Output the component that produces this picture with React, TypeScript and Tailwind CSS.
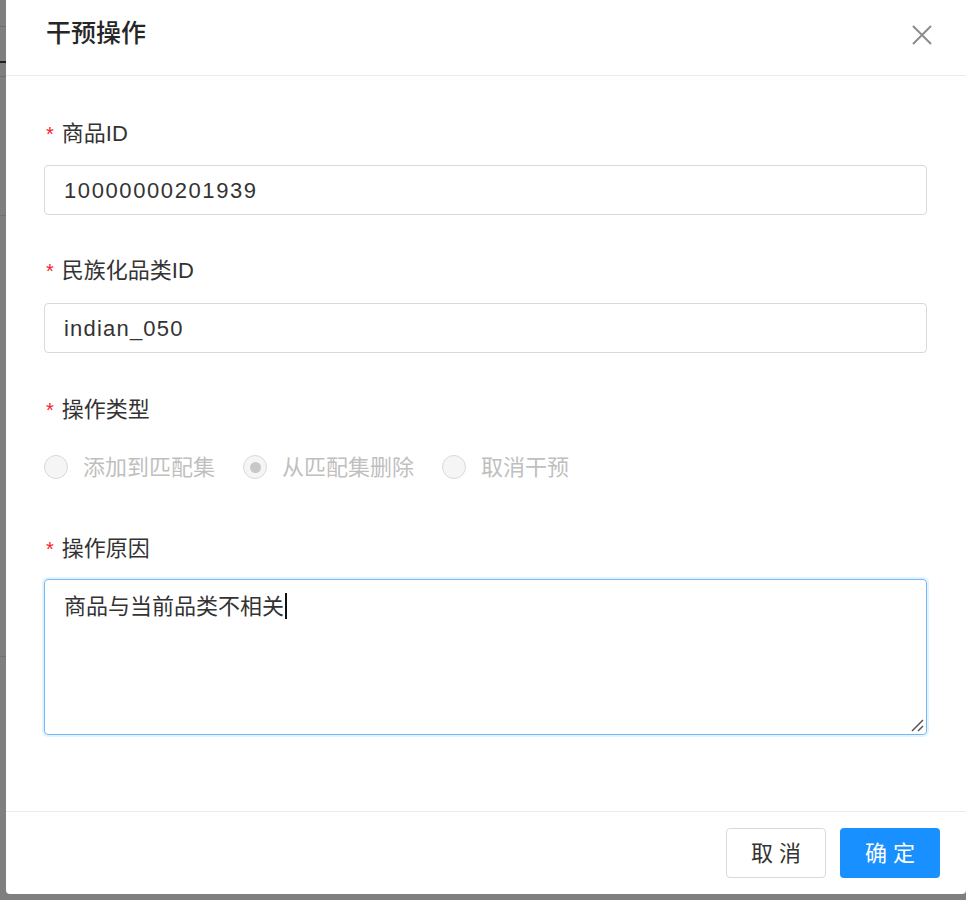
import React from "react";

const font = {
  fontFamily: '"Liberation Sans", "Noto Sans CJK SC", sans-serif',
};

function Label({ text }: { text: string }) {
  return (
    <div className="flex h-[32px] items-center text-[22px] leading-[32px] text-[#333]">
      <span className="mr-[8px] ml-[2px] text-[20px] text-[#f5222d]">*</span>
      {text}
    </div>
  );
}

function Radio({ label, checked }: { label: string; checked?: boolean }) {
  return (
    <div className="flex items-center">
      <span className="flex h-[24px] w-[24px] items-center justify-center rounded-full border border-[#d9d9d9] bg-[#f5f5f5]">
        {checked && <span className="h-[11px] w-[11px] rounded-full bg-[#c8c8c8]" />}
      </span>
      <span className="ml-[15px] text-[22px] text-[#bfbfbf]">{label}</span>
    </div>
  );
}

export default function App() {
  return (
    <div className="relative h-[900px] w-[966px] overflow-hidden bg-[#7f7f7f]" style={font}>
      {/* masked page behind */}
      <div className="absolute left-0 top-0 w-[6px]">
        <div className="mt-[26px] h-px bg-[#6f6f6f]" />
        <div className="mt-[34px] h-[2px] bg-[#1f1f1f]" />
        <div className="mt-[13px] h-px bg-[#6f6f6f]" />
        <div className="mt-[138px] h-px bg-[#737373]" />
        <div className="mt-[440px] h-px bg-[#737373]" />
      </div>

      <div className="ml-[6px] flex h-[894px] w-[960px] flex-col rounded-b-[4px] bg-white">
        {/* header */}
        <div className="flex h-[76px] shrink-0 items-center justify-between border-b border-[#ebebeb] pb-[8px] pl-[40px] pr-[34px]">
          <div className="text-[25px] font-medium text-[#262626]">干预操作</div>
          <svg width="20" height="20" viewBox="0 0 20 20" className="mt-[2px]">
            <path d="M1 1 L19 19 M19 1 L1 19" stroke="#8c8c8c" strokeWidth="2" />
          </svg>
        </div>

        {/* body */}
        <div className="flex-1 pl-[38px] pr-[39px] pt-[42px]">
          <Label text="商品ID" />
          <div className="mt-[15px] flex h-[50px] items-center rounded-[4px] border border-[#d9d9d9] px-[19px] text-[22px] tracking-[1.6px] text-[#333]">
            10000000201939
          </div>

          <div className="mt-[40px]">
            <Label text="民族化品类ID" />
          </div>
          <div className="mt-[16px] flex h-[50px] items-center rounded-[4px] border border-[#d9d9d9] px-[19px] text-[22px] tracking-[1.2px] text-[#333]">
            indian_050
          </div>

          <div className="mt-[41px]">
            <Label text="操作类型" />
          </div>
          <div className="mt-[25px] flex h-[32px] items-center gap-[28px]">
            <Radio label="添加到匹配集" />
            <Radio label="从匹配集删除" checked />
            <Radio label="取消干预" />
          </div>

          <div className="mt-[50px]">
            <Label text="操作原因" />
          </div>
          <div className="relative mt-[14px] h-[156px] rounded-[4px] border border-[#74b9f7] px-[19px] pt-[10px] shadow-[0_0_0_2px_rgba(24,144,255,0.12)]">
            <div className="flex h-[32px] items-center text-[22px] text-[#333]">
              商品与当前品类不相关
              <span className="ml-[1px] inline-block h-[26px] w-[2px] bg-[#111]" />
            </div>
            <svg width="14" height="14" viewBox="0 0 14 14" className="absolute bottom-[2px] right-[2px]">
              <path d="M2 13 L13 2 M8 13 L13 8" stroke="#555" strokeWidth="1.5" />
            </svg>
          </div>
        </div>

        {/* footer */}
        <div className="flex h-[83px] shrink-0 items-center justify-end gap-[14px] border-t border-[#ebebeb] pr-[26px]">
          <button className="h-[50px] w-[100px] rounded-[4px] border border-[#d9d9d9] bg-white text-[22px] tracking-[6px] text-[#333]">
            <span className="ml-[6px]">取消</span>
          </button>
          <button className="h-[50px] w-[100px] rounded-[4px] bg-[#1890ff] text-[22px] tracking-[6px] text-white">
            <span className="ml-[6px]">确定</span>
          </button>
        </div>
      </div>
    </div>
  );
}
